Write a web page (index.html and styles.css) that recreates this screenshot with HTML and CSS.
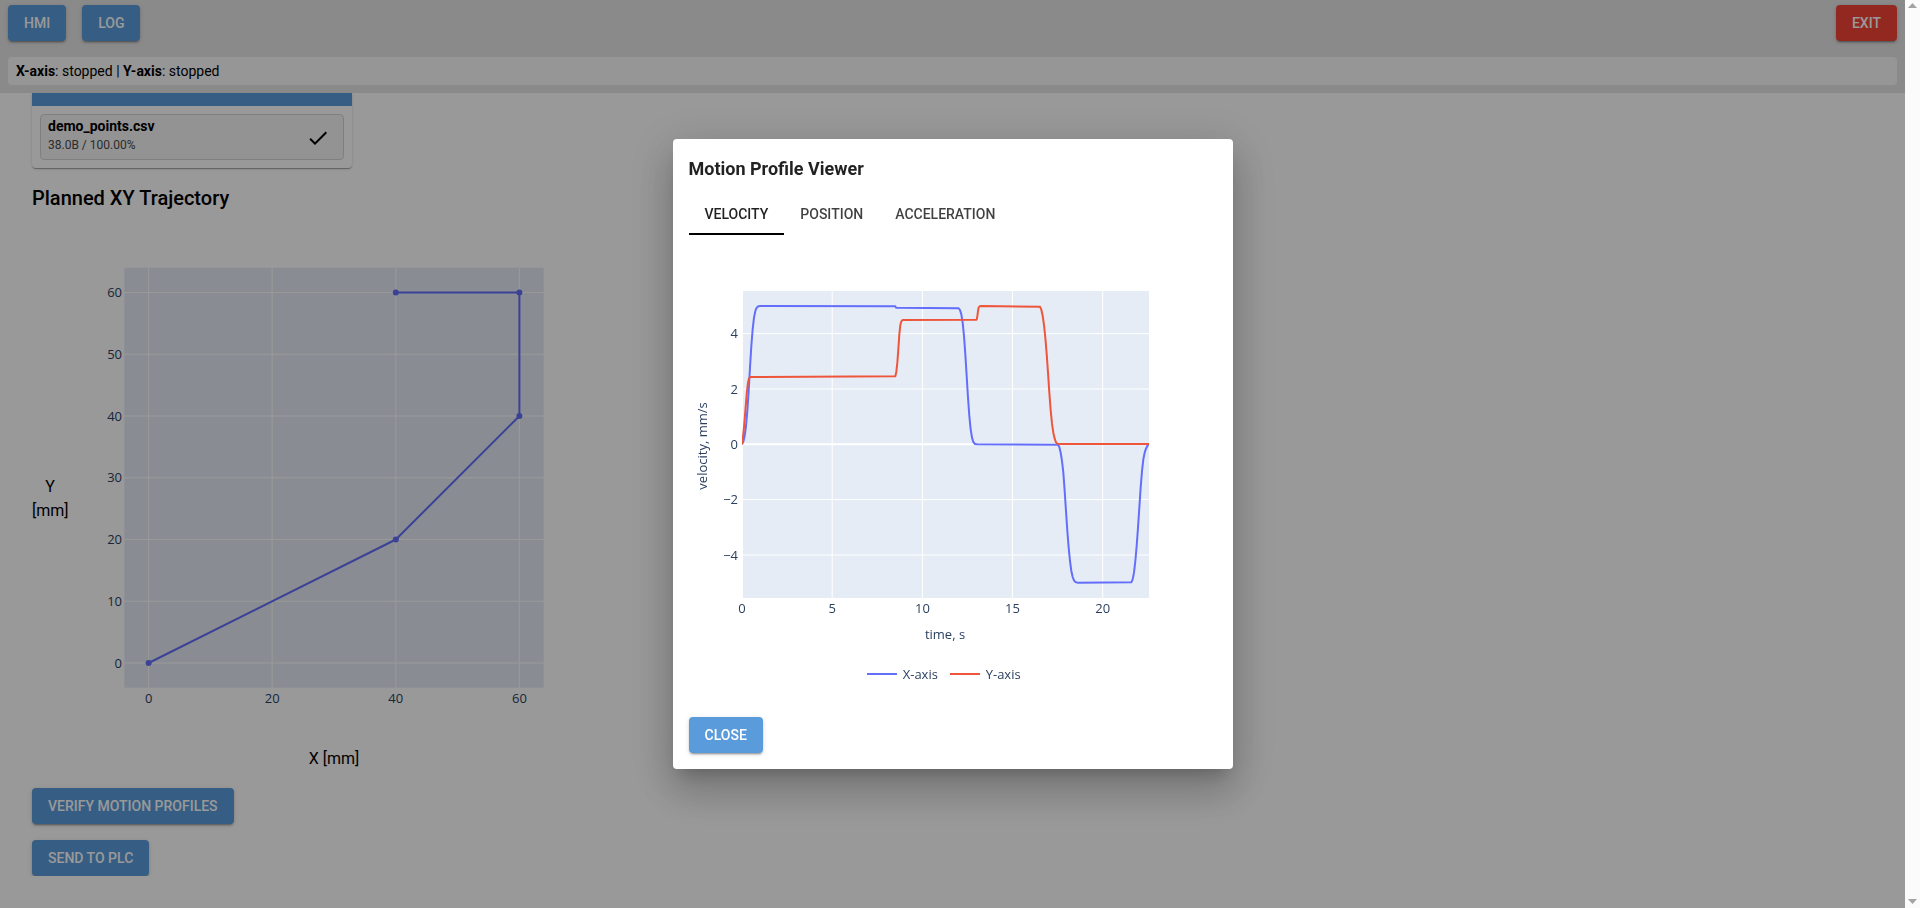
FILE: index.html
```html
<!DOCTYPE html>
<html lang="en">
<head>
<meta charset="utf-8">
<title>Trajectory Planner</title>
<link rel="stylesheet" href="styles.css">
</head>
<body>
<header class="topbar">
  <div class="nav-row">
    <div class="nav-left">
      <button class="btn">HMI</button>
      <button class="btn">LOG</button>
    </div>
    <button class="btn btn-danger">EXIT</button>
  </div>
  <div class="status"><b>X-axis</b>: stopped | <b>Y-axis</b>: stopped</div>
</header>

<main class="content">
  <section class="upload-card">
    <div class="upload-head"></div>
    <div class="upload-body">
      <div class="file-item">
        <div class="file-info">
          <div class="file-name">demo_points.csv</div>
          <div class="file-size">38.0B / 100.00%</div>
        </div>
        <svg class="check" viewBox="0 0 24 24" width="24" height="24"><path d="M9 16.17 4.83 12l-1.42 1.41L9 19 21 7l-1.41-1.41z"/></svg>
      </div>
    </div>
  </section>

  <h2 class="section-title">Planned XY Trajectory</h2>

  <div class="traj">
    <div class="traj-row">
      <div class="ylabel">Y [mm]</div>
      <svg class="traj-plot" width="500" height="480" viewBox="0 0 500 480">
        <rect class="plot-bg" x="56.3" y="27.8" width="419.4" height="419.9"/>
        <g class="grid">
          <line x1="80.6" y1="27.8" x2="80.6" y2="447.7"/>
          <line x1="204.2" y1="27.8" x2="204.2" y2="447.7"/>
          <line x1="327.8" y1="27.8" x2="327.8" y2="447.7"/>
          <line x1="451.4" y1="27.8" x2="451.4" y2="447.7"/>
          <line x1="56.3" y1="423" x2="475.7" y2="423"/>
          <line x1="56.3" y1="361.25" x2="475.7" y2="361.25"/>
          <line x1="56.3" y1="299.5" x2="475.7" y2="299.5"/>
          <line x1="56.3" y1="237.75" x2="475.7" y2="237.75"/>
          <line x1="56.3" y1="176" x2="475.7" y2="176"/>
          <line x1="56.3" y1="114.25" x2="475.7" y2="114.25"/>
          <line x1="56.3" y1="52.5" x2="475.7" y2="52.5"/>
        </g>
        <g class="ticks ticks-y">
          <text x="54" y="427.5">0</text>
          <text x="54" y="365.7">10</text>
          <text x="54" y="304">20</text>
          <text x="54" y="242.3">30</text>
          <text x="54" y="180.5">40</text>
          <text x="54" y="118.8">50</text>
          <text x="54" y="57">60</text>
        </g>
        <g class="ticks ticks-x">
          <text x="80.6" y="463">0</text>
          <text x="204.2" y="463">20</text>
          <text x="327.8" y="463">40</text>
          <text x="451.4" y="463">60</text>
        </g>
        <polyline class="path-line" points="80.6,423 327.8,299.5 451.4,176 451.4,52.5 327.8,52.5"/>
        <g class="markers">
          <circle cx="80.6" cy="423" r="3"/>
          <circle cx="327.8" cy="299.5" r="3"/>
          <circle cx="451.4" cy="176" r="3"/>
          <circle cx="451.4" cy="52.5" r="3"/>
          <circle cx="327.8" cy="52.5" r="3"/>
        </g>
      </svg>
    </div>
    <div class="xlabel">X [mm]</div>
  </div>

  <div class="actions">
    <button class="btn">VERIFY MOTION PROFILES</button>
    <button class="btn">SEND TO PLC</button>
  </div>
</main>

<div class="backdrop"></div>
<div class="dialog-wrap">
  <div class="dialog" role="dialog">
    <h2 class="dialog-title">Motion Profile Viewer</h2>
    <div class="tabs">
      <div class="tab tab-active">VELOCITY</div>
      <div class="tab">POSITION</div>
      <div class="tab">ACCELERATION</div>
    </div>
    <svg class="profile-plot" width="528" height="466" viewBox="0 0 528 466">
      <defs>
        <clipPath id="plotclip"><rect x="53" y="56" width="407" height="307"/></clipPath>
      </defs>
      <rect class="plot-bg" x="53" y="56" width="407" height="307"/>
      <g class="grid">
        <line x1="143.2" y1="56" x2="143.2" y2="363"/>
        <line x1="233.4" y1="56" x2="233.4" y2="363"/>
        <line x1="323.5" y1="56" x2="323.5" y2="363"/>
        <line x1="413.7" y1="56" x2="413.7" y2="363"/>
        <line x1="53" y1="98.6" x2="460" y2="98.6"/>
        <line x1="53" y1="154" x2="460" y2="154"/>
        <line x1="53" y1="264.6" x2="460" y2="264.6"/>
        <line x1="53" y1="320" x2="460" y2="320"/>
      </g>
      <line class="zeroline" x1="53" y1="209.3" x2="460" y2="209.3"/>
      <line class="zeroline" x1="53" y1="56" x2="53" y2="363"/>
      <g class="ticks ticks-y">
        <text x="49" y="103.2">4</text>
        <text x="49" y="158.6">2</text>
        <text x="49" y="213.9">0</text>
        <text x="49" y="269.2">−2</text>
        <text x="49" y="324.6">−4</text>
      </g>
      <g class="ticks ticks-x">
        <text x="53" y="377.5">0</text>
        <text x="143.2" y="377.5">5</text>
        <text x="233.4" y="377.5">10</text>
        <text x="323.5" y="377.5">15</text>
        <text x="413.7" y="377.5">20</text>
      </g>
      <text class="axis-title" x="256" y="403.8">time, s</text>
      <text class="axis-title" x="17.5" y="211" transform="rotate(-90 17.5 211)">velocity, mm/s</text>
      <g clip-path="url(#plotclip)">
        <g transform="translate(-19 26) scale(0.333333)">
          <polyline class="trace trace-x" points="216,550 220,542 224,525 228,495 232,450 236,390 240,320 244,255 248,205 252,170 256,150 260,140 265,136 272,135 676,136 678,140 866,142 870,147 874,160 878,185 882,225 886,280 890,345 894,410 898,465 902,505 906,530 910,543 915,549 922,550 1164,551 1168,558 1172,575 1176,600 1180,635 1184,690 1188,750 1192,810 1196,860 1200,900 1204,930 1208,948 1212,958 1216,963 1222,965 1384,964 1388,955 1392,935 1396,900 1400,855 1404,800 1408,740 1412,680 1416,630 1420,595 1424,575 1428,563 1432,555 1437,549"/>
          <polyline class="trace trace-y" points="216,550 219,528 222,498 225,462 228,425 231,390 234,365 237,352 241,348 676,346 679,332 682,305 685,265 688,220 691,192 694,181 698,177 920,176 922,166 924,150 926,139 929,136 934,135 1110,137 1114,146 1118,164 1122,192 1126,230 1130,278 1134,335 1138,395 1142,447 1146,488 1150,515 1154,533 1158,544 1162,548 1168,549 1437,549"/>
        </g>
      </g>
      <g class="legend">
        <line class="legend-x" x1="178" y1="439" x2="208" y2="439"/>
        <text x="213.7" y="443.5">X-axis</text>
        <line class="legend-y" x1="261" y1="439" x2="291" y2="439"/>
        <text x="296.7" y="443.5">Y-axis</text>
      </g>
    </svg>
    <div class="dialog-actions">
      <button class="btn">CLOSE</button>
    </div>
  </div>
</div>

<div class="scrollbar" aria-hidden="true">
  <svg class="sb-arrow" width="15" height="12" viewBox="0 0 15 12"><path d="M3 8 7.5 3 12 8z"/></svg>
  <svg class="sb-arrow" width="15" height="12" viewBox="0 0 15 12"><path d="M3 4 7.5 9 12 4z"/></svg>
</div>
</body>
</html>
```

FILE: styles.css
```css
body {
  margin: 0 15px 0 0;
  background: #ffffff;
  font-family: Roboto, "Noto Sans", Arial, sans-serif;
  color: rgba(0, 0, 0, 0.87);
}

/* ---------- buttons ---------- */
.btn {
  height: 36px;
  padding: 0 16px;
  border: none;
  border-radius: 4px;
  background: #5a9bdb;
  color: #ffffff;
  font-family: Roboto, Arial, sans-serif;
  font-size: 14px;
  font-weight: 500;
  text-transform: uppercase;
  box-shadow: 0 3px 1px -2px rgba(0, 0, 0, 0.2), 0 2px 2px 0 rgba(0, 0, 0, 0.14), 0 1px 5px 0 rgba(0, 0, 0, 0.12);
  cursor: pointer;
}

.btn-danger {
  background: #f44336;
}

/* ---------- top bar ---------- */
.topbar {
  background: #e6e6e6;
  padding: 5px 8px 8px;
}

.nav-row {
  display: flex;
  justify-content: space-between;
  align-items: center;
  height: 36px;
}

.nav-left {
  display: flex;
  gap: 16px;
}

.status {
  margin-top: 16px;
  height: 28px;
  line-height: 28px;
  padding: 0 8px;
  background: #fafafa;
  border-radius: 4px;
  font-size: 14px;
  color: #000;
}

.status b {
  font-weight: 700;
}

/* ---------- content ---------- */
.content {
  padding: 0 32px;
}

.upload-card {
  width: 320px;
  background: #ffffff;
  border-radius: 0 0 4px 4px;
  box-shadow: 0 2px 1px -1px rgba(0, 0, 0, 0.2), 0 1px 1px 0 rgba(0, 0, 0, 0.14), 0 1px 3px 0 rgba(0, 0, 0, 0.12);
}

.upload-head {
  height: 13px;
  background: #5a9bdb;
}

.upload-body {
  padding: 8px;
}

.file-item {
  box-sizing: border-box;
  height: 46px;
  display: flex;
  align-items: center;
  justify-content: space-between;
  padding: 3px 13px 6px 7px;
  border: 1px solid #d4d4d4;
  border-radius: 4px;
  background: #f5f5f5;
}

.file-info {
  display: flex;
  flex-direction: column;
  gap: 2px;
}

.file-name {
  font-size: 14px;
  font-weight: 700;
  line-height: 17px;
  color: #000;
}

.file-size {
  font-size: 12px;
  line-height: 16px;
  color: #4a4a4a;
}

.check {
  display: block;
  fill: #000;
  margin-top: 4px;
}

.section-title {
  margin: 14px 0 0;
  font-size: 20px;
  line-height: 32px;
  font-weight: 500;
  color: #000;
}

/* ---------- trajectory ---------- */
.traj {
  margin-top: 26px;
}

.traj-row {
  display: flex;
  align-items: flex-start;
}

.ylabel {
  width: 36px;
  margin-top: 235px;
  font-size: 16px;
  line-height: 24px;
  text-align: center;
  color: #000;
}

.traj-plot {
  display: block;
}

.xlabel {
  width: 420px;
  margin: 27px 0 0 92px;
  font-size: 16px;
  line-height: 24px;
  text-align: center;
  color: #000;
}

.actions {
  margin-top: 17px;
  display: flex;
  flex-direction: column;
  align-items: flex-start;
  gap: 16px;
}

/* ---------- plots (shared) ---------- */
.plot-bg {
  fill: #e5ecf6;
}

.grid line {
  stroke: #ffffff;
  stroke-width: 1;
}

.zeroline {
  stroke: #ffffff;
  stroke-width: 2;
}

.ticks text,
.axis-title,
.legend text {
  font-family: "Open Sans", Verdana, Arial, sans-serif;
  font-size: 13px;
  fill: #2a3f5f;
}

.ticks-y text {
  text-anchor: end;
}

.ticks-x text,
.axis-title {
  text-anchor: middle;
}

.path-line {
  fill: none;
  stroke: #636efa;
  stroke-width: 2;
  stroke-linejoin: round;
}

.markers circle {
  fill: #636efa;
}

.trace {
  fill: none;
  stroke-width: 2;
  stroke-linejoin: round;
  vector-effect: non-scaling-stroke;
}

.trace-x,
.legend-x {
  stroke: #636efa;
}

.trace-y,
.legend-y {
  stroke: #ef553b;
}

.legend line {
  stroke-width: 2;
}

/* ---------- modal ---------- */
.backdrop {
  position: fixed;
  top: 0;
  bottom: 0;
  left: 0;
  right: 15px;
  background: rgba(0, 0, 0, 0.4);
}

.dialog-wrap {
  position: fixed;
  top: 0;
  bottom: 0;
  left: 0;
  right: 15px;
  display: flex;
  align-items: center;
  justify-content: center;
}

.dialog {
  width: 560px;
  box-sizing: border-box;
  padding: 14px 16px 16px;
  background: #ffffff;
  border-radius: 4px;
  box-shadow: 0 11px 15px -7px rgba(0, 0, 0, 0.2), 0 24px 38px 3px rgba(0, 0, 0, 0.14), 0 9px 46px 8px rgba(0, 0, 0, 0.12);
}

.dialog-title {
  margin: 0;
  font-size: 18px;
  line-height: 32px;
  font-weight: 700;
  color: rgba(0, 0, 0, 0.87);
}

.tabs {
  display: flex;
  margin-top: 2px;
  height: 48px;
}

.tab {
  box-sizing: border-box;
  height: 48px;
  display: flex;
  align-items: center;
  padding: 8px 16px 0;
  font-size: 14px;
  font-weight: 500;
  color: rgba(0, 0, 0, 0.75);
  border-bottom: 2px solid transparent;
}

.tab-active {
  color: rgba(0, 0, 0, 0.87);
  border-bottom-color: #000;
}

.profile-plot {
  display: block;
}

.dialog-actions {
  margin-top: 16px;
  display: flex;
}

/* ---------- window scrollbar (disabled state) ---------- */
.scrollbar {
  position: fixed;
  top: 0;
  right: 0;
  bottom: 0;
  width: 15px;
  display: flex;
  flex-direction: column;
  justify-content: space-between;
  padding: 0 0 1px;
  box-sizing: border-box;
  background: #fbfbfb;
}

.sb-arrow {
  display: block;
  fill: #a3a3a3;
}
```
